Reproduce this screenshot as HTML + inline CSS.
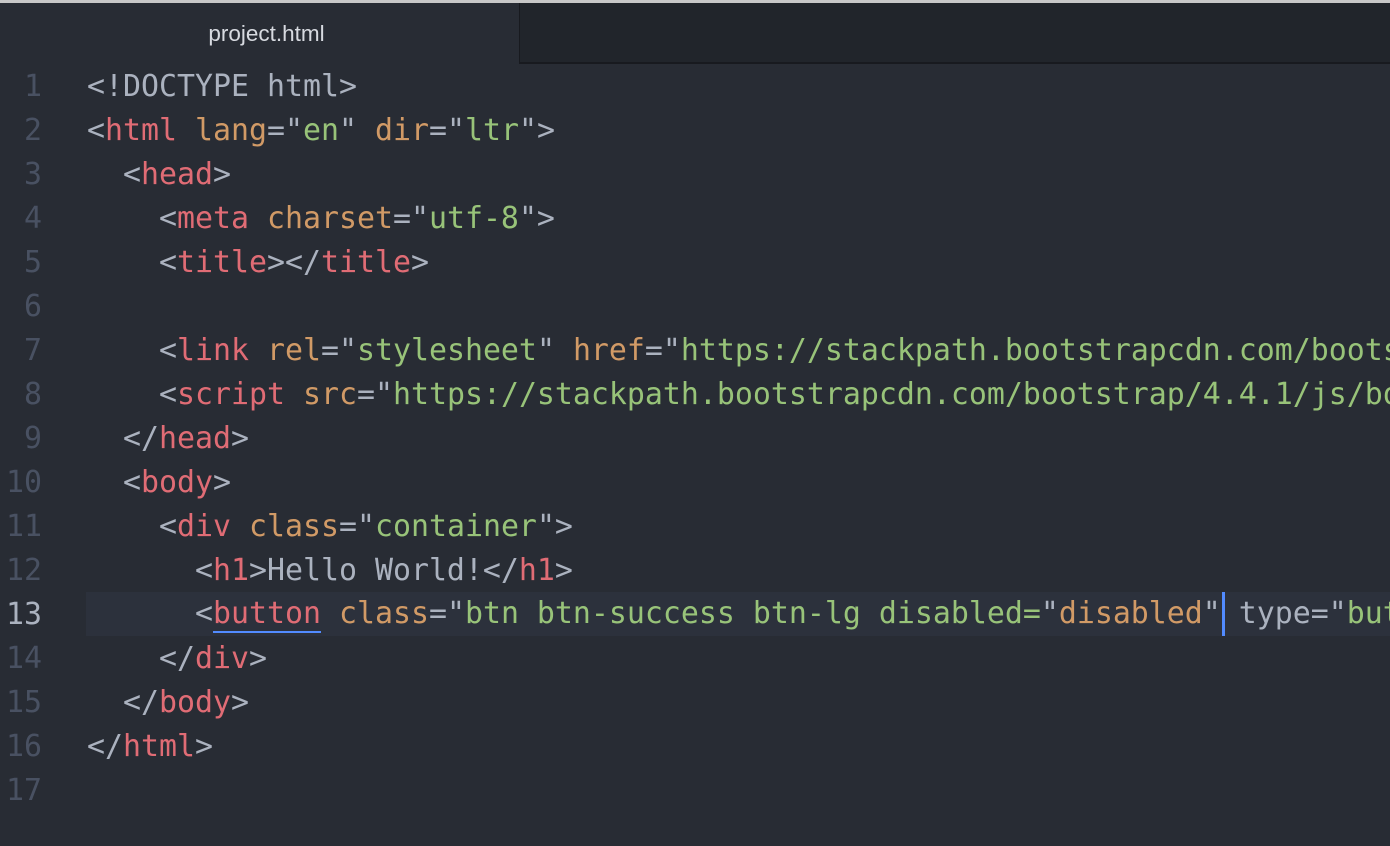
<!DOCTYPE html>
<html><head><style>
html,body{margin:0;padding:0;width:1390px;height:846px;overflow:hidden;background:#282c34}
#top{position:absolute;left:0;top:0;width:1390px;height:3px;background:#c8c8c8}
#tabbar{position:absolute;left:0;top:3px;width:1390px;height:59px;background:#21252b;border-bottom:2px solid #181a1f}
#tab{position:absolute;left:0;top:3px;width:520px;height:61px;background:#282c34;border-right:1px solid #181a1f;color:#d7dae0;font:22.5px "Liberation Sans",sans-serif;text-align:center;line-height:62px;box-sizing:border-box;padding-left:14px}
#hl{position:absolute;left:86px;top:592px;width:1304px;height:44px;background:#2c313c}
.ln{position:absolute;left:0;width:42px;text-align:right;color:#495162;font:29.9px "DejaVu Sans Mono",monospace;line-height:44px;margin-top:1px}
.cd{position:absolute;left:87px;width:1303px;overflow:hidden;white-space:pre;color:#abb2bf;font:29.9px "DejaVu Sans Mono",monospace;line-height:44px;margin-top:1px}
.t{color:#e06c75}.a{color:#d19a66}.s{color:#98c379}
</style></head><body>
<div id="top"></div><div id="tabbar"></div><div id="tab">project.html</div>
<div id="hl"></div>
<div class="ln" style="top:64px">1</div>
<div class="ln" style="top:108px">2</div>
<div class="ln" style="top:152px">3</div>
<div class="ln" style="top:196px">4</div>
<div class="ln" style="top:240px">5</div>
<div class="ln" style="top:284px">6</div>
<div class="ln" style="top:328px">7</div>
<div class="ln" style="top:372px">8</div>
<div class="ln" style="top:416px">9</div>
<div class="ln" style="top:460px">10</div>
<div class="ln" style="top:504px">11</div>
<div class="ln" style="top:548px">12</div>
<div class="ln" style="top:592px;color:#abb2bf">13</div>
<div class="ln" style="top:636px">14</div>
<div class="ln" style="top:680px">15</div>
<div class="ln" style="top:724px">16</div>
<div class="ln" style="top:768px">17</div>
<div class="cd" style="top:64px">&lt;!DOCTYPE html&gt;</div>
<div class="cd" style="top:108px">&lt;<span class="t">html</span> <span class="a">lang</span>="<span class="s">en</span>" <span class="a">dir</span>="<span class="s">ltr</span>"&gt;</div>
<div class="cd" style="top:152px">  &lt;<span class="t">head</span>&gt;</div>
<div class="cd" style="top:196px">    &lt;<span class="t">meta</span> <span class="a">charset</span>="<span class="s">utf-8</span>"&gt;</div>
<div class="cd" style="top:240px">    &lt;<span class="t">title</span>&gt;&lt;/<span class="t">title</span>&gt;</div>
<div class="cd" style="top:328px">    &lt;<span class="t">link</span> <span class="a">rel</span>="<span class="s">stylesheet</span>" <span class="a">href</span>="<span class="s">https://stackpath.bootstrapcdn.com/bootstrap</span></div>
<div class="cd" style="top:372px">    &lt;<span class="t">script</span> <span class="a">src</span>="<span class="s">https://stackpath.bootstrapcdn.com/bootstrap/4.4.1/js/bootstrap</span></div>
<div class="cd" style="top:416px">  &lt;/<span class="t">head</span>&gt;</div>
<div class="cd" style="top:460px">  &lt;<span class="t">body</span>&gt;</div>
<div class="cd" style="top:504px">    &lt;<span class="t">div</span> <span class="a">class</span>="<span class="s">container</span>"&gt;</div>
<div class="cd" style="top:548px">      &lt;<span class="t">h1</span>&gt;Hello World!&lt;/<span class="t">h1</span>&gt;</div>
<div class="cd" style="top:591px">      &lt;<span class="t" style="border-bottom:2px solid #528bff">button</span> <span class="a">class</span>="<span class="s">btn btn-success btn-lg disabled=</span>"<span class="a">disabled</span>"<span style="display:inline-block;width:3px;height:44px;background:#528bff;vertical-align:top;margin-left:1px;margin-right:-4px"></span> type="<span class="s">button</span></div>
<div class="cd" style="top:636px">    &lt;/<span class="t">div</span>&gt;</div>
<div class="cd" style="top:680px">  &lt;/<span class="t">body</span>&gt;</div>
<div class="cd" style="top:724px">&lt;/<span class="t">html</span>&gt;</div>
</body></html>
